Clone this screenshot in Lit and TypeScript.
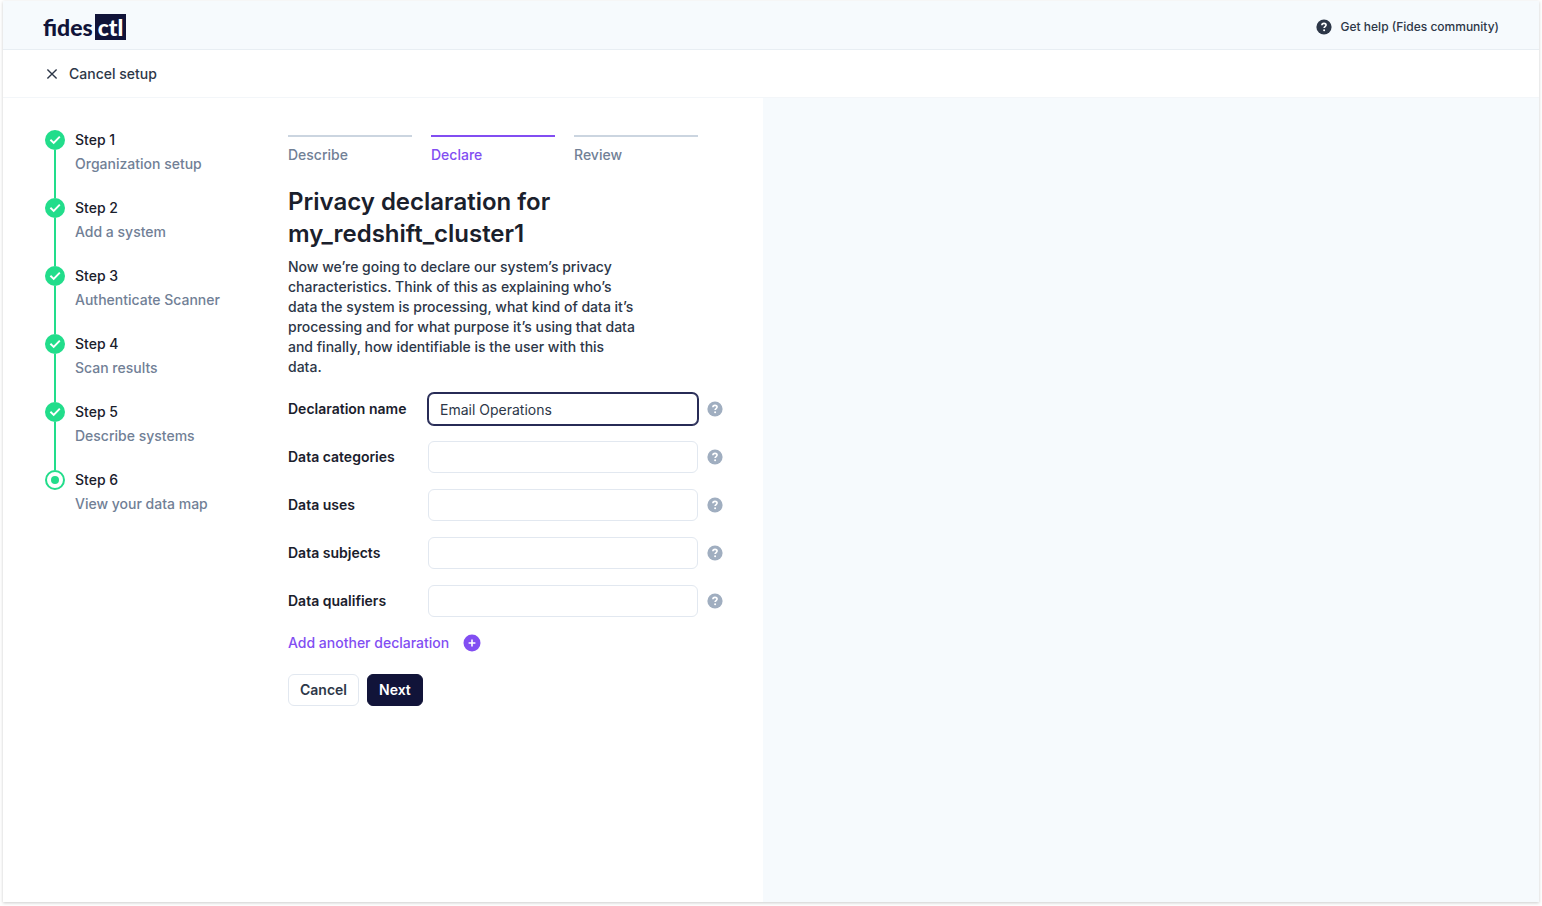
import { LitElement, html, css, svg, nothing } from "lit";
import { customElement, state } from "lit/decorators.js";
import { classMap } from "lit/directives/class-map.js";

interface Step {
  title: string;
  detail: string;
  done: boolean;
}

interface Field {
  id: string;
  label: string;
  value: string;
}

const STEPS: Step[] = [
  { title: "Step 1", detail: "Organization setup", done: true },
  { title: "Step 2", detail: "Add a system", done: true },
  { title: "Step 3", detail: "Authenticate Scanner", done: true },
  { title: "Step 4", detail: "Scan results", done: true },
  { title: "Step 5", detail: "Describe systems", done: true },
  { title: "Step 6", detail: "View your data map", done: false },
];

const TABS = ["Describe", "Declare", "Review"];

const FIELDS: Field[] = [
  { id: "name", label: "Declaration name", value: "Email Operations" },
  { id: "categories", label: "Data categories", value: "" },
  { id: "uses", label: "Data uses", value: "" },
  { id: "subjects", label: "Data subjects", value: "" },
  { id: "qualifiers", label: "Data qualifiers", value: "" },
];

const questionIcon = html`<svg class="icon" viewBox="0 0 16 16" width="16" height="16" aria-hidden="true">
  <circle cx="8" cy="8" r="7.6" fill="currentColor"></circle>
  <path
    d="M5.9 6.3C5.9 5.1 6.8 4.4 8 4.4s2.1.7 2.1 1.7c0 1.5-2 1.4-2 3"
    fill="none"
    stroke="#fff"
    stroke-width="1.6"
  ></path>
  <circle cx="8.1" cy="11.3" r="1" fill="#fff"></circle>
</svg>`;

const closeIcon = html`<svg class="icon" viewBox="0 0 12 12" width="12" height="12" aria-hidden="true">
  <path d="M1.4 1.4 10.6 10.6M10.6 1.4 1.4 10.6" fill="none" stroke="currentColor" stroke-width="1.4"></path>
</svg>`;

const plusIcon = html`<svg class="icon" viewBox="0 0 18 18" width="18" height="18" aria-hidden="true">
  <circle cx="9" cy="9" r="8.5" fill="currentColor"></circle>
  <path d="M9 5.6v6.8M5.6 9h6.8" stroke="#fff" stroke-width="1.6"></path>
</svg>`;

const stepIcon = (done: boolean) => html`<svg class="icon" viewBox="0 0 20 20" width="20" height="20" aria-hidden="true">
  ${done
    ? svg`<circle cx="10" cy="10" r="10" fill="#22dd8b"></circle>
        <path d="M5.4 9.8 8.7 12.9 14.8 6.6" fill="none" stroke="#fff" stroke-width="1.9"></path>`
    : svg`<circle cx="10" cy="10" r="9" fill="#fff" stroke="#22dd8b" stroke-width="2"></circle>
        <circle cx="10" cy="10" r="4" fill="#22dd8b"></circle>`}
</svg>`;

@customElement("app-root")
export class AppRoot extends LitElement {
  @state() private activeTab = 1;

  static styles = css`
    :host {
      box-sizing: border-box;
      min-height: 100vh;
      padding: 1px 3px 4px;
      display: flex;
      background: #fefefe;
      color: #1a202c;
      font: 500 14px/20px Inter, "Liberation Sans", sans-serif;
    }
    .frame {
      flex: 1;
      display: flex;
      flex-direction: column;
      background: #fff;
      box-shadow: 0 1px 3px rgba(0, 0, 0, 0.2);
    }
    .icon {
      display: block;
      flex: none;
    }
    button,
    input {
      box-sizing: border-box;
      font: inherit;
      margin: 0;
    }
    button {
      cursor: pointer;
    }
    .header {
      box-sizing: border-box;
      height: 49px;
      padding: 3px 40px 0;
      display: flex;
      align-items: center;
      justify-content: space-between;
      background: #f6fafd;
      border-bottom: 1px solid #e8eef3;
    }
    .logo {
      display: flex;
      align-items: center;
      gap: 2px;
      color: #111439;
      text-decoration: none;
      font: 900 23px/26px Lato, "Open Sans", sans-serif;
    }
    .logo-box {
      padding: 0 3px;
      background: #111439;
      color: #fff;
    }
    .help {
      display: flex;
      align-items: center;
      gap: 9px;
      color: #2d3748;
      text-decoration: none;
      font-size: 12px;
    }
    .subheader {
      box-sizing: border-box;
      height: 48px;
      padding: 0 43px;
      display: flex;
      align-items: center;
      border-bottom: 1px solid #f3f6f9;
    }
    .cancel-setup {
      display: flex;
      align-items: center;
      gap: 11px;
      padding: 0;
      border: 0;
      background: none;
      color: #2d3748;
    }
    .body {
      flex: 1;
      display: grid;
      grid-template-columns: minmax(760px, 98fr) 100fr;
    }
    .left {
      display: flex;
      gap: 48px;
      padding: 32px 40px 32px 42px;
    }
    .right {
      background: #f6fafd;
    }
    .steps {
      flex: none;
      width: 195px;
      list-style: none;
      margin: 0;
      padding: 0;
    }
    .step {
      display: flex;
      gap: 10px;
    }
    .rail {
      display: flex;
      flex-direction: column;
      align-items: center;
    }
    .rail::after {
      content: "";
      flex: 1;
      width: 2px;
      background: #22dd8b;
    }
    .step:last-child .rail::after {
      display: none;
    }
    .step-text {
      display: flex;
      flex-direction: column;
      gap: 4px;
      padding-bottom: 24px;
    }
    .step-detail {
      color: #718096;
    }
    .content {
      flex: 1;
      max-width: 435px;
      padding-top: 5px;
    }
    .tabs {
      display: grid;
      grid-template-columns: repeat(3, 1fr);
      gap: 19px;
      margin-right: 25px;
    }
    .tab {
      padding: 8px 0 0;
      border: 0;
      border-top: 2px solid #cbd5e0;
      background: none;
      color: #718096;
      text-align: left;
    }
    .tab.active {
      border-top-color: #824ef2;
      color: #824ef2;
    }
    .title {
      margin: 21px 0 7px;
      max-width: 350px;
      font-size: 24px;
      line-height: 32px;
      font-weight: 600;
    }
    .intro {
      margin: 0 0 16px;
      max-width: 350px;
      color: #2d3748;
    }
    .fields {
      display: grid;
      gap: 16px;
    }
    .field {
      display: grid;
      grid-template-columns: 140px 1fr 25px;
      align-items: center;
    }
    .label {
      font-weight: 600;
    }
    .input {
      width: 100%;
      height: 32px;
      padding: 0 11px;
      border: 1px solid #e2e8f0;
      border-radius: 6px;
      background: #fff;
      color: #2d3748;
      font-weight: 400;
      outline: none;
    }
    .input.current {
      border-color: #272b56;
      box-shadow: 0 0 0 1px #272b56;
    }
    .hint {
      justify-self: end;
      padding: 0;
      border: 0;
      background: none;
      color: #a0aec0;
    }
    .add {
      display: flex;
      align-items: center;
      gap: 14px;
      height: 20px;
      margin: 16px 0 21px;
      padding: 0;
      border: 0;
      background: none;
      color: #824ef2;
    }
    .actions {
      display: flex;
      gap: 8px;
    }
    .btn {
      height: 32px;
      padding: 0 11px;
      border: 1px solid #e2e8f0;
      border-radius: 6px;
      background: #fff;
      color: #2d3748;
      font-weight: 600;
    }
    .btn.primary {
      border-color: #111439;
      background: #111439;
      color: #fff;
    }
  `;

  render() {
    return html`
      <div class="frame">
        <header class="header">
          <a class="logo" href="#"><span>fides</span><span class="logo-box">ctl</span></a>
          <a class="help" href="#">${questionIcon}Get help (Fides community)</a>
        </header>
        <div class="subheader">
          <button class="cancel-setup" type="button">${closeIcon}Cancel setup</button>
        </div>
        <main class="body">
          <section class="left">
            <ol class="steps">
              ${STEPS.map(
                (s) => html`<li class="step">
                  <div class="rail">${stepIcon(s.done)}</div>
                  <div class="step-text"><span>${s.title}</span><span class="step-detail">${s.detail}</span></div>
                </li>`
              )}
            </ol>
            <div class="content">
              <nav class="tabs">
                ${TABS.map(
                  (t, i) => html`<button
                    type="button"
                    class=${classMap({ tab: true, active: i === this.activeTab })}
                    aria-current=${i === this.activeTab ? "step" : nothing}
                    @click=${() => (this.activeTab = i)}
                  >${t}</button>`
                )}
              </nav>
              <h1 class="title">Privacy declaration for my_redshift_cluster1</h1>
              <p class="intro">
                Now we’re going to declare our system’s privacy characteristics. Think of this as explaining who’s data
                the system is processing, what kind of data it’s processing and for what purpose it’s using that data
                and finally, how identifiable is the user with this data.
              </p>
              <form @submit=${(e: Event) => e.preventDefault()}>
                <div class="fields">
                  ${FIELDS.map(
                    (f) => html`<div class="field">
                      <label class="label" for=${f.id}>${f.label}</label>
                      <input
                        class=${classMap({ input: true, current: f.value !== "" })}
                        id=${f.id}
                        type="text"
                        .value=${f.value}
                      />
                      <button class="hint" type="button" aria-label="About ${f.label}">${questionIcon}</button>
                    </div>`
                  )}
                </div>
                <button class="add" type="button">Add another declaration${plusIcon}</button>
                <div class="actions">
                  <button class="btn" type="button">Cancel</button>
                  <button class="btn primary" type="submit">Next</button>
                </div>
              </form>
            </div>
          </section>
          <aside class="right"></aside>
        </main>
      </div>
    `;
  }
}
